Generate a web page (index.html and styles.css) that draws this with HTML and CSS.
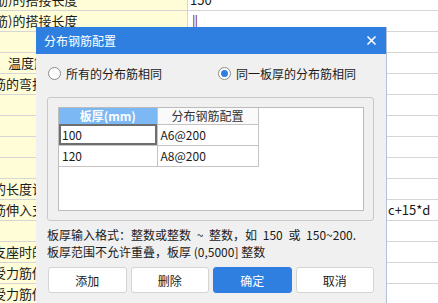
FILE: index.html
```html
<!DOCTYPE html>
<html lang="zh-CN">

<head>
    <meta charset="UTF-8">
    <title>分布钢筋配置</title>
    <link rel="stylesheet" href="styles.css">
</head>

<body>
    <div class="sheet">
        <div class="row"><div class="left cut">钢筋)的搭接长度</div><div class="right">150</div></div>
        <div class="row"><div class="left cut">钢筋)的搭接长度</div><div class="right"><span class="caret">||</span></div></div>
        <div class="row"><div class="left"></div><div class="right"></div></div>
        <div class="row"><div class="left indent">温度筋的配置</div><div class="right"></div></div>
        <div class="row"><div class="left cut2">筋的弯折长度</div><div class="right"></div></div>
        <div class="row"><div class="left"></div><div class="right"></div></div>
        <div class="row"><div class="left"></div><div class="right"></div></div>
        <div class="row"><div class="left"></div><div class="right"></div></div>
        <div class="row"><div class="left"></div><div class="right"></div></div>
        <div class="row"><div class="left cut2">的长度计算</div><div class="right"></div></div>
        <div class="row"><div class="left cut2">筋伸入支座</div><div class="right"><span class="far">c+15*d</span></div></div>
        <div class="row"><div class="left"></div><div class="right"></div></div>
        <div class="row"><div class="left cut2">支座时的</div><div class="right"></div></div>
        <div class="row"><div class="left cut2">受力筋伸入</div><div class="right"></div></div>
        <div class="row"><div class="left cut2">受力筋伸入</div><div class="right"></div></div>
    </div>

    <div class="dialog">
        <div class="titlebar">
            <span>分布钢筋配置</span>
            <svg class="close" width="11" height="11" viewBox="0 0 11 11">
                <path d="M1.5 1.5 L9.5 9.5 M9.5 1.5 L1.5 9.5" stroke="#fff" stroke-width="1.6" fill="none"/>
            </svg>
        </div>
        <div class="body">
            <div class="radios">
                <label class="radio"><span class="dot"></span>所有的分布筋相同</label>
                <label class="radio on"><span class="dot"></span>同一板厚的分布筋相同</label>
            </div>

            <div class="group">
                <div class="grid">
                    <table>
                        <tr>
                            <th class="hl">板厚(mm)</th>
                            <th>分布钢筋配置</th>
                        </tr>
                        <tr>
                            <td class="sel">100</td>
                            <td>A6@200</td>
                        </tr>
                        <tr>
                            <td>120</td>
                            <td>A8@200</td>
                        </tr>
                    </table>
                </div>
            </div>

            <p class="hint"><span class="wide">板厚输入格式：整数或整数 ~ 整数，如 150 或 150~200.</span><br>板厚范围不允许重叠，板厚 (0,5000] 整数</p>

            <div class="buttons">
                <button class="btn">添加</button>
                <button class="btn">删除</button>
                <button class="btn primary">确定</button>
                <button class="btn">取消</button>
            </div>
        </div>
    </div>
</body>

</html>
```

FILE: styles.css
```css
* {
    box-sizing: border-box;
}

body {
    margin: 0;
    width: 438px;
    height: 303px;
    overflow: hidden;
    position: relative;
    background: #fff;
    font-family: "Noto Sans CJK SC", "Noto Sans", sans-serif;
    font-size: 12px;
    color: #1a1a1a;
}

/* spreadsheet behind the dialog */
.sheet {
    margin-top: -10px;
}

.row {
    display: flex;
    height: 21px;
    border-bottom: 1px solid #d6d6d6;
}

.left {
    width: 188px;
    flex: none;
    background: #fffdd8;
    border-right: 1px solid #d6d6d6;
    line-height: 20px;
    white-space: nowrap;
    overflow: hidden;
    font-size: 13px;
}

.cut {
    text-indent: -18px;
}

.cut2 {
    text-indent: -7px;
}

.indent {
    padding-left: 8px;
}

.right {
    flex: 1;
    line-height: 20px;
    padding-left: 2px;
    font-size: 13px;
    white-space: nowrap;
}

.caret {
    color: #7a1030;
    padding-left: 2px;
    letter-spacing: -1px;
}

.far {
    padding-left: 198px;
}

/* dialog */
.dialog {
    position: absolute;
    left: 36px;
    top: 27px;
    width: 351px;
    height: 290px;
    background: #f0f0f0;
    border-right: 1px solid #b4c0d4;
}

.titlebar {
    height: 27px;
    background: #2e7fe0;
    color: #fff;
    font-size: 12px;
    display: flex;
    align-items: center;
    justify-content: space-between;
    padding: 0 9px 0 8px;
}

.body {
    padding: 0 12px 0 11px;
}

.radios {
    display: flex;
    height: 16px;
    margin: 11px 0 16px;
    align-items: center;
    font-size: 12px;
}

.radio {
    display: flex;
    align-items: center;
    gap: 5px;
    padding-left: 1px;
}

.radio + .radio {
    margin-left: 55px;
}

.dot {
    width: 13px;
    height: 13px;
    border-radius: 50%;
    border: 1px solid #8a8a8a;
    background: #fff;
    display: flex;
    align-items: center;
    justify-content: center;
}

.on .dot::after {
    content: "";
    width: 7px;
    height: 7px;
    border-radius: 50%;
    background: #2e7fe0;
}

.group {
    height: 124px;
    border: 1px solid #c8c8c8;
    border-radius: 3px;
    padding: 9px 9px 9px 10px;
}

.grid {
    height: 104px;
    background: #fff;
    border: 1px solid #bcbcbc;
}

table {
    border-collapse: collapse;
    font-size: 12px;
}

th {
    height: 16px;
    width: 101px;
    font-weight: normal;
    line-height: 15px;
    color: #333;
    background: #fafafa;
    border-right: 1px solid #c4c4c4;
    border-bottom: 1px solid #c4c4c4;
    padding: 0;
}

th.hl {
    width: 98px;
    background: #7cb8f4;
    color: #fff;
    font-weight: bold;
}

td {
    height: 21px;
    padding: 0 0 0 3px;
    line-height: 19px;
    border-right: 1px solid #c4c4c4;
    border-bottom: 1px solid #c4c4c4;
}

td.sel {
    outline: 2px solid #6e6e6e;
    outline-offset: -2px;
}

.hint {
    margin: 5px 0 0;
    line-height: 17px;
    font-size: 12px;
    color: #1a1a1a;
}

.wide {
    word-spacing: 3px;
}

.buttons {
    display: grid;
    grid-template-columns: repeat(4, 1fr);
    gap: 4px;
    margin: 7px 0 0 1px;
}

.btn {
    height: 26px;
    border: 1px solid #d4d4d4;
    border-radius: 3px;
    background: #fff;
    font-family: inherit;
    font-size: 12px;
    color: #1a1a1a;
    padding: 0;
}

.btn.primary {
    background: #2e7fe0;
    border-color: #2e7fe0;
    color: #fff;
}
```
